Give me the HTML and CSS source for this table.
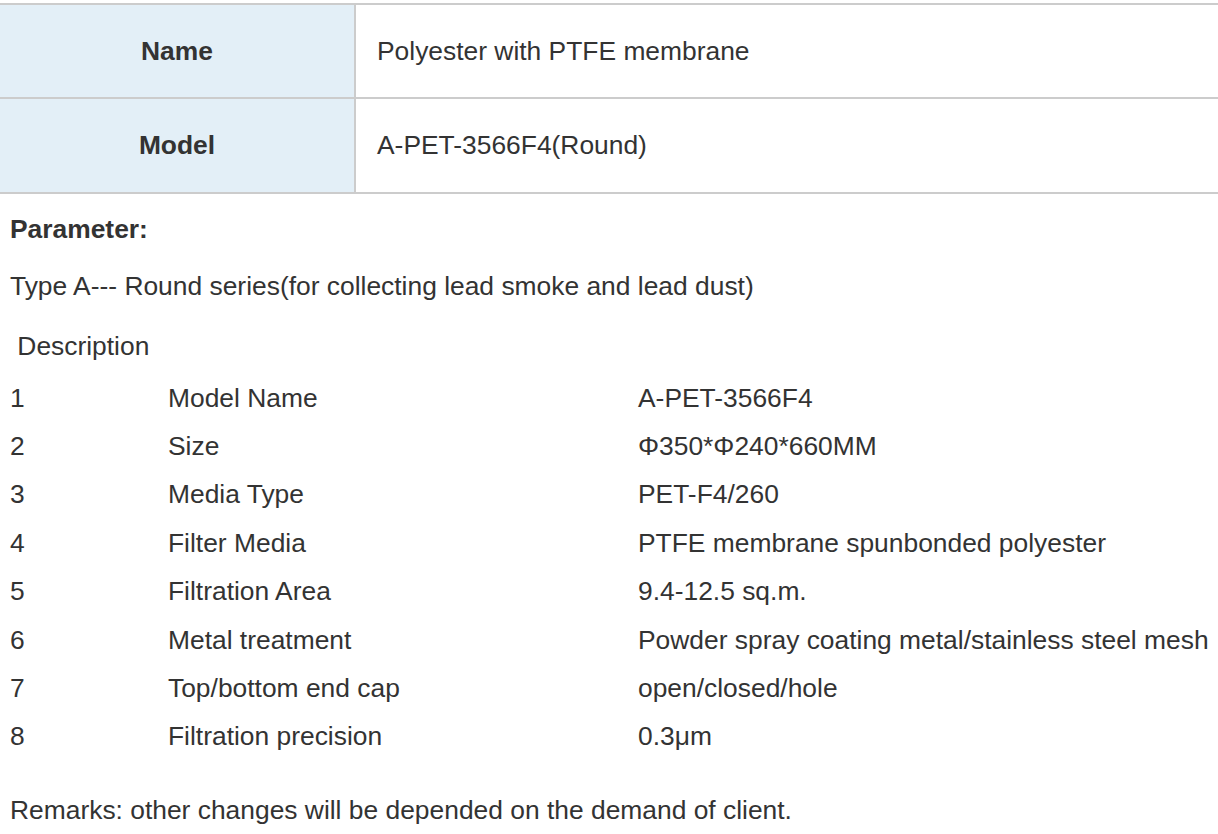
FILE: index.html
```html
<!DOCTYPE html>
<html lang="en">
<head>
<meta charset="utf-8">
<title>Polyester with PTFE membrane</title>
<link rel="stylesheet" href="styles.css">
</head>
<body>
<table class="info">
  <tbody>
    <tr class="info-row info-row-first">
      <th class="info-label">Name</th>
      <td class="info-value">Polyester with PTFE membrane</td>
    </tr>
    <tr class="info-row">
      <th class="info-label">Model</th>
      <td class="info-value">A-PET-3566F4(Round)</td>
    </tr>
  </tbody>
</table>
<div class="content">
  <p class="param-title">Parameter:</p>
  <p class="type-line">Type A--- Round series(for collecting lead smoke and lead dust)</p>
  <p class="desc-line">&nbsp;Description</p>
  <div class="spec">
    <div class="spec-row"><span>1</span><span>Model Name</span><span>A-PET-3566F4</span></div>
    <div class="spec-row"><span>2</span><span>Size</span><span>Φ350*Φ240*660MM</span></div>
    <div class="spec-row"><span>3</span><span>Media Type</span><span>PET-F4/260</span></div>
    <div class="spec-row"><span>4</span><span>Filter Media</span><span>PTFE membrane spunbonded polyester</span></div>
    <div class="spec-row"><span>5</span><span>Filtration Area</span><span>9.4-12.5 sq.m.</span></div>
    <div class="spec-row"><span>6</span><span>Metal treatment</span><span>Powder spray coating metal/stainless steel mesh</span></div>
    <div class="spec-row"><span>7</span><span>Top/bottom end cap</span><span>open/closed/hole</span></div>
    <div class="spec-row"><span>8</span><span>Filtration precision</span><span>0.3μm</span></div>
  </div>
  <p class="remarks">Remarks: other changes will be depended on the demand of client.</p>
</div>
</body>
</html>
```

FILE: styles.css
```css
html, body {
  margin: 0;
  padding: 0;
  background: #ffffff;
}
body {
  font-family: "Liberation Sans", Arial, Helvetica, sans-serif;
  font-size: 26.4px;
  line-height: 29px;
  color: #333333;
  overflow: hidden;
}
.info {
  width: 100%;
  border-collapse: collapse;
  margin-top: 3px;
}
.info-row {
  height: 95px;
}
.info-row-first {
  height: 94px;
}
.info-label {
  width: 354px;
  background: #e3eff7;
  font-weight: bold;
  text-align: center;
  border-top: 2px solid #cccccc;
  border-bottom: 2px solid #cccccc;
  border-right: 2px solid #cccccc;
  padding: 0;
}
.info-value {
  text-align: left;
  padding: 0 0 0 21px;
  border-top: 2px solid #cccccc;
  border-bottom: 2px solid #cccccc;
}
.content {
  padding-left: 10px;
}
.content p {
  margin: 0;
}
.param-title {
  font-weight: bold;
  margin-top: 21px !important;
}
.type-line {
  margin-top: 28px !important;
}
.desc-line {
  margin-top: 31px !important;
}
.spec {
  margin-top: 13px;
}
.spec-row {
  display: grid;
  grid-template-columns: 158px 470px 1fr;
  height: 48.4px;
  align-items: center;
  white-space: nowrap;
}
.remarks {
  margin-top: 35px !important;
}
```
